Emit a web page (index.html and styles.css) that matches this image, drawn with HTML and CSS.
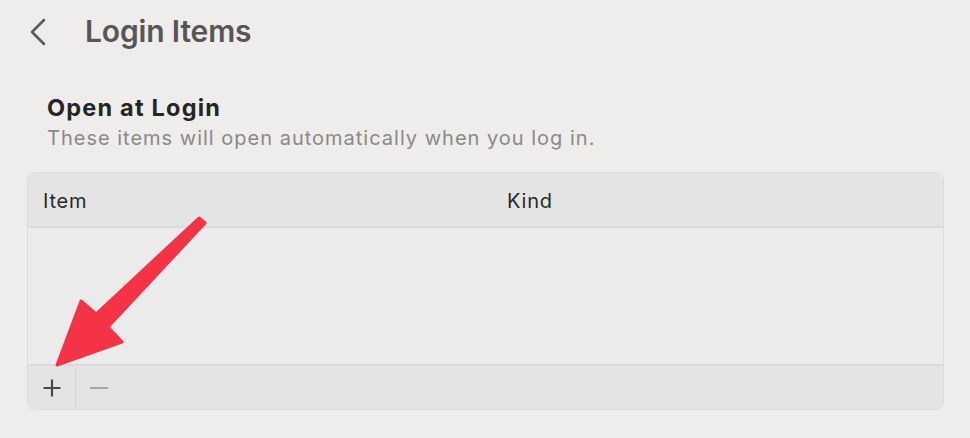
FILE: index.html
```html
<!DOCTYPE html>
<html>
<head>
<meta charset="utf-8">
<link rel="stylesheet" href="styles.css">
</head>
<body>
<div class="page">
  <header class="topbar">
    <svg class="back" width="20" height="30" viewBox="0 0 20 30"><path d="M16 3 L4 15 L16 27" fill="none" stroke="#5a5858" stroke-width="2.6" stroke-linecap="round" stroke-linejoin="round"/></svg>
    <h1 class="title">Login Items</h1>
  </header>
  <section class="section">
    <h2 class="sec-title">Open at Login</h2>
    <p class="sec-sub">These items will open automatically when you log in.</p>
  </section>
  <div class="table">
    <div class="thead">
      <div class="col-item">Item</div>
      <div class="col-kind">Kind</div>
    </div>
    <div class="tbody"></div>
    <div class="tfoot">
      <button class="btn add">
        <svg width="20" height="20" viewBox="0 0 20 20"><path d="M10 1.5 V18.5 M1.5 10 H18.5" stroke="#4a4848" stroke-width="2.2"/></svg>
      </button>
      <span class="sep"></span>
      <button class="btn remove">
        <svg width="20" height="20" viewBox="0 0 20 20"><path d="M1 10 H19" stroke="#a9a7a7" stroke-width="2"/></svg>
      </button>
    </div>
  </div>
</div>
<svg class="arrow" width="970" height="438" viewBox="0 0 970 438">
  <polygon points="57,365 81,301 96,314 199,218 205,223 108,327 122,342" fill="#f53347" stroke="#f53347" stroke-width="3" stroke-linejoin="round"/>
</svg>
</body>
</html>
```

FILE: styles.css
```css
* { box-sizing: border-box; }
html, body { margin: 0; padding: 0; }
body {
  width: 970px;
  height: 438px;
  background: #efedec;
  font-family: Inter, "Open Sans", sans-serif;
  position: relative;
  overflow: hidden;
}
.page { padding: 0 27px 0 27px; }
.topbar {
  display: flex;
  align-items: center;
  height: 64px;
}
.back { margin-left: 1px; margin-top: -1px; }
.title {
  margin: -2px 0 0 37px;
  font-size: 30px;
  font-weight: 600;
  color: #575555;
  letter-spacing: -0.15px;
}
.section { padding: 28px 0 0 20px; }
.sec-title {
  margin: 0;
  font-size: 23.5px;
  font-weight: 700;
  color: #262424;
  line-height: 32px;
  letter-spacing: 1.2px;
}
.sec-sub {
  margin: 0;
  font-size: 20px;
  color: #8a8888;
  line-height: 28px;
  letter-spacing: 1px;
}
.table {
  margin-top: 20px;
  width: 917px;
  border: 1px solid #dddbdb;
  border-radius: 8px;
  background: #ecebeb;
  overflow: hidden;
}
.thead {
  display: flex;
  height: 55px;
  align-items: center;
  padding-top: 3px;
  background: #e5e4e4;
  border-bottom: 2px solid #dcdbdb;
  font-size: 20px;
  color: #2a2828;
  letter-spacing: 0.8px;
}
.col-item { width: 479px; padding-left: 15px; }
.col-kind { flex: 1; }
.tbody { height: 136px; }
.tfoot {
  display: flex;
  align-items: center;
  height: 45px;
  background: #e5e4e4;
  border-top: 2px solid #dcdbdb;
}
.btn {
  border: 0;
  background: transparent;
  padding: 0;
  width: 47px;
  height: 42px;
  display: flex;
  align-items: center;
  justify-content: center;
}
.sep {
  width: 1px;
  height: 40px;
  background: #d6d5d5;
}
.remove { width: 46px; }
.arrow { position: absolute; left: 0; top: 0; pointer-events: none; }
```
